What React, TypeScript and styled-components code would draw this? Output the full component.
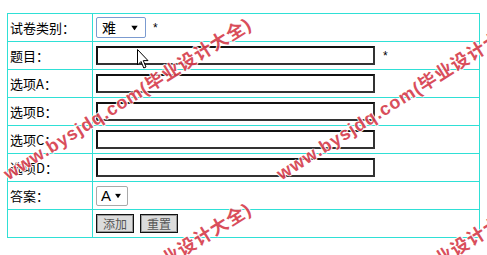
import React from "react";
import styled, { createGlobalStyle } from "styled-components";

const Global = createGlobalStyle`
  html, body { margin: 0; padding: 0; background: #fff; overflow: hidden; }
  body { font-family: "Noto Sans CJK SC", "Liberation Sans", sans-serif; color: #000; }
`;

const Page = styled.div`
  position: relative;
  width: 487px;
  height: 255px;
  overflow: hidden;
  padding: 13px 0 0 7px;
  box-sizing: border-box;
`;

const Form = styled.form`
  display: grid;
  grid-template-columns: 84px 1fr;
  grid-auto-rows: 27px;
  gap: 1px;
  width: 473px;
  box-sizing: border-box;
  padding: 1px;
  background: #2fe0d6;
  margin: 0;
`;

const Label = styled.div`
  background: #fff;
  display: flex;
  align-items: center;
  padding-left: 2px;
  font-size: 13px;
  line-height: 1;
  white-space: nowrap;
`;

const Field = styled.div`
  background: #fff;
  display: flex;
  align-items: center;
  padding-left: 3px;
  gap: ${(p: { $gap?: number }) => p.$gap ?? 0}px;
`;

const TextInput = styled.input`
  width: 279px;
  height: 19px;
  box-sizing: border-box;
  border: 2px solid #111;
  border-right-color: #333;
  border-bottom-color: #333;
  padding: 0 2px;
  margin: 0;
  font-size: 12px;
  background: #fff;
  outline: none;
`;

const Star = styled.span`
  font-size: 12px;
  font-family: "Liberation Sans", sans-serif;
  margin-left: ${(p: { $ml: number }) => p.$ml}px;
  line-height: 1;
`;

const SelectWrap = styled.span`
  position: relative;
  display: inline-flex;
`;

const Select = styled.select<{ $w: number; $h: number; $tone: string; $fs: number; $pl: number }>`
  appearance: none;
  -webkit-appearance: none;
  width: ${(p) => p.$w}px;
  height: ${(p) => p.$h}px;
  box-sizing: border-box;
  border: 1px solid ${(p) => p.$tone};
  border-radius: 2px;
  background: #fff;
  padding: 0 0 0 ${(p) => p.$pl}px;
  margin: 0;
  font-size: ${(p) => p.$fs}px;
  font-family: "Liberation Sans", "Noto Sans CJK SC", sans-serif;
  color: #000;
  outline: none;
`;

const Arrow = styled.svg<{ $r: number }>`
  position: absolute;
  right: ${(p) => p.$r}px;
  top: 50%;
  transform: translateY(-50%);
  pointer-events: none;
`;

const Button = styled.button`
  width: 38px;
  height: 19px;
  box-sizing: border-box;
  padding: 0;
  margin: 0;
  border: 1px solid #111;
  box-shadow: inset 0 0 0 1px #9a9a9a;
  background: #dcdcdc;
  color: #555;
  font-size: 12px;
  font-family: "Noto Sans CJK SC", sans-serif;
  line-height: 1;
`;

const Overlay = styled.div`
  position: absolute;
  inset: 0;
  pointer-events: none;
`;

const Mark = styled.span<{ $x: number; $y: number }>`
  position: absolute;
  left: ${(p) => p.$x}px;
  top: ${(p) => p.$y - 18}px;
  height: 18px;
  line-height: 18px;
  white-space: nowrap;
  font-family: "Liberation Sans", "Noto Sans CJK SC", sans-serif;
  font-weight: bold;
  font-size: 18px;
  letter-spacing: 1px;
  color: #d6404e;
  text-shadow: 1px 0 0 #fff, -1px 0 0 #fff, 0 1px 0 #fff, 0 -1px 0 #fff;
  transform-origin: 0 100%;
  transform: rotate(-32deg);
  opacity: 0.92;
`;

const Cursor = styled.svg`
  position: absolute;
  left: 137px;
  top: 49px;
  pointer-events: none;
`;

const Tri = ({ r, w, h }: { r: number; w: number; h: number }) => (
  <Arrow $r={r} width={w} height={h} viewBox="0 0 8 6">
    <path d="M0 0 L8 0 L4 6 Z" fill="#000" />
  </Arrow>
);

const rows = ["选项A：", "选项B：", "选项C：", "选项D："];

export default function App() {
  const marks = [
    [10, 183],
    [283, 183],
    [10, 368],
    [283, 368],
  ];
  return (
    <>
      <Global />
      <Page>
        <Form onSubmit={(e) => e.preventDefault()}>
          <Label>试卷类别：</Label>
          <Field>
            <SelectWrap>
              <Select $w={50} $h={21} $tone="#7b9bd0" $fs={14} $pl={5} defaultValue="难">
                <option>难</option>
                <option>中</option>
                <option>易</option>
              </Select>
              <Tri r={8} w={7} h={5} />
            </SelectWrap>
            <Star $ml={7}>*</Star>
          </Field>
          <Label>题目：</Label>
          <Field>
            <TextInput />
            <Star $ml={8}>*</Star>
          </Field>
          {rows.map((r) => (
            <React.Fragment key={r}>
              <Label>{r}</Label>
              <Field>
                <TextInput />
              </Field>
            </React.Fragment>
          ))}
          <Label>答案：</Label>
          <Field>
            <SelectWrap>
              <Select $w={32} $h={20} $tone="#a9a9a9" $fs={15} $pl={4} defaultValue="A">
                <option>A</option>
                <option>B</option>
                <option>C</option>
                <option>D</option>
              </Select>
              <Tri r={7} w={6} h={5} />
            </SelectWrap>
          </Field>
          <Label />
          <Field $gap={6}>
            <Button type="submit">添加</Button>
            <Button type="reset">重置</Button>
          </Field>
        </Form>
        <Overlay>
          {marks.map(([x, y], i) => (
            <Mark key={i} $x={x} $y={y}>
              www.bysjdq.com(毕业设计大全)
            </Mark>
          ))}
          <Cursor width="12" height="20" viewBox="0 0 12 20">
            <path d="M0.5 0.5 L0.5 16 L4 12.5 L6.8 19 L9 18 L6.3 11.6 L11 11.6 Z" fill="#fff" stroke="#000" strokeWidth="1" />
          </Cursor>
        </Overlay>
      </Page>
    </>
  );
}
